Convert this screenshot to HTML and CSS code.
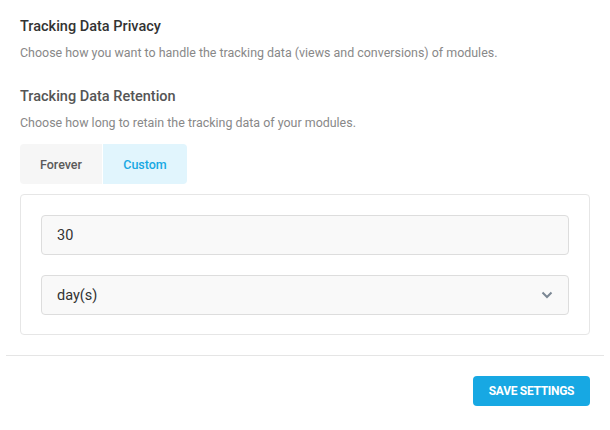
FILE: index.html
```html
<!DOCTYPE html>
<html>
<head>
<meta charset="utf-8">
<link rel="stylesheet" href="styles.css">
</head>
<body>
<div class="page">
  <section class="content">
    <h2 class="title">Tracking Data Privacy</h2>
    <p class="desc">Choose how you want to handle the tracking data (views and conversions) of modules.</p>
    <h2 class="title title-2">Tracking Data Retention</h2>
    <p class="desc">Choose how long to retain the tracking data of your modules.</p>
    <div class="tabs">
      <div class="tab">Forever</div>
      <div class="tab active">Custom</div>
    </div>
    <div class="card">
      <div class="field">30</div>
      <div class="field select">
        <span>day(s)</span>
        <svg class="chev" width="12" height="8" viewBox="0 0 12 8"><path d="M1.5 1.5 L6 6 L10.5 1.5" fill="none" stroke="#7b8794" stroke-width="2"/></svg>
      </div>
    </div>
  </section>
  <div class="divider"></div>
  <div class="footer">
    <button class="btn">SAVE SETTINGS</button>
  </div>
</div>
</body>
</html>
```

FILE: styles.css
```css
* { box-sizing: border-box; }
html, body { margin: 0; padding: 0; background: #fff; }
body { font-family: Roboto, "Open Sans", sans-serif; }
.page { width: 610px; padding: 0 6px; }
.content { padding: 16px 14px 0; }
.title {
  margin: 0;
  font-size: 14.5px;
  font-weight: 500;
  line-height: 22px;
  color: #333;
}
.title-2 { margin-top: 22px; color: #555; }
.desc {
  margin: 4px 0 0;
  font-size: 12.45px;
  line-height: 22px;
  color: #888;
}
.tabs { display: flex; margin-top: 10px; height: 40px; }
.tab {
  display: flex;
  align-items: center;
  justify-content: center;
  font-size: 12.5px;
  font-weight: 500;
  color: #5a5a5a;
  background: #f6f6f6;
  width: 82px;
}
.tab:first-child { border-radius: 4px 0 0 4px; margin-right: 1px; }
.tab.active {
  width: 84px;
  background: #e1f5fd;
  color: #17a8e3;
  border-radius: 0 4px 4px 0;
}
.card {
  margin-top: 10px;
  border: 1px solid #e6e6e6;
  border-radius: 4px;
  padding: 20px 20px 19px;
  display: flex;
  flex-direction: column;
  gap: 20px;
}
.field {
  height: 40px;
  border: 1px solid #ddd;
  border-radius: 4px;
  background: #f9f9f9;
  display: flex;
  align-items: center;
  padding: 0 15px;
  font-size: 14.5px;
  color: #333;
}
.select { justify-content: space-between; padding-right: 15px; }
.chev { display: block; }
.divider { margin-top: 20px; height: 1px; background: #e5e5e5; }
.footer { display: flex; justify-content: flex-end; padding: 20px 14px 0; }
.btn {
  width: 117px;
  height: 30px;
  border: none;
  border-radius: 4px;
  background: #17a8e3;
  color: #fff;
  font-family: Roboto, sans-serif;
  font-weight: 700;
  font-size: 12px;
  letter-spacing: -0.3px;
  padding: 0;
}
```
